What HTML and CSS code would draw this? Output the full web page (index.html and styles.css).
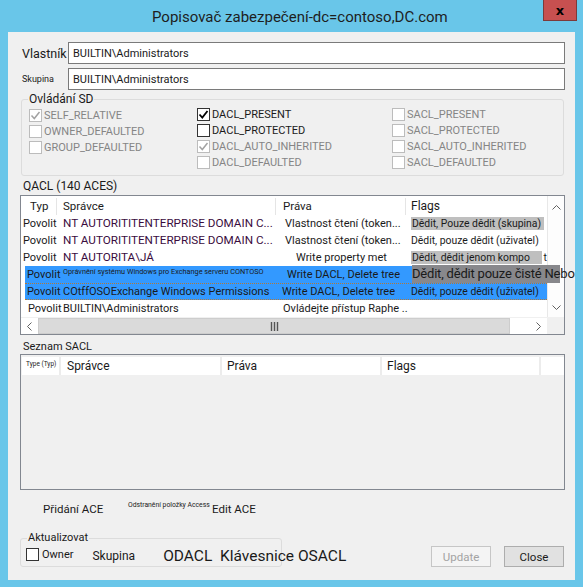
FILE: index.html
```html
<!DOCTYPE html>
<html lang="cs">
<head>
    <meta charset="UTF-8">
    <title>Popisovač zabezpečení</title>
    <link rel="stylesheet" href="styles.css">
</head>
<body>
<div class="window">
    <header class="titlebar">
        <h1 class="title">Popisovač zabezpečení-dc=contoso,DC.com</h1>
        <button class="close-x">x</button>
    </header>

    <main class="client">
        <div class="field-row">
            <label class="lbl-owner" for="owner">Vlastník</label>
            <input class="text-in" id="owner" type="text" value="BUILTIN\Administrators">
        </div>
        <div class="field-row">
            <label class="lbl-group" for="group">Skupina</label>
            <input class="text-in" id="group" type="text" value="BUILTIN\Administrators">
        </div>

        <fieldset class="sd-box">
            <legend>Ovládání SD</legend>
            <div class="sd-cols">
                <div class="sd-col first">
                    <div class="chk off on"><span class="box"><svg viewBox="0 0 11 11"><path d="M1.5 5.5l2.8 3 5.2-6.5"/></svg></span>SELF_RELATIVE</div>
                    <div class="chk off"><span class="box"></span>OWNER_DEFAULTED</div>
                    <div class="chk off"><span class="box"></span>GROUP_DEFAULTED</div>
                </div>
                <div class="sd-col">
                    <div class="chk on"><span class="box"><svg viewBox="0 0 11 11"><path d="M1.5 5.5l2.8 3 5.2-6.5"/></svg></span>DACL_PRESENT</div>
                    <div class="chk"><span class="box"></span>DACL_PROTECTED</div>
                    <div class="chk off on"><span class="box"><svg viewBox="0 0 11 11"><path d="M1.5 5.5l2.8 3 5.2-6.5"/></svg></span>DACL_AUTO_INHERITED</div>
                    <div class="chk off"><span class="box"></span>DACL_DEFAULTED</div>
                </div>
                <div class="sd-col">
                    <div class="chk off"><span class="box"></span>SACL_PRESENT</div>
                    <div class="chk off"><span class="box"></span>SACL_PROTECTED</div>
                    <div class="chk off"><span class="box"></span>SACL_AUTO_INHERITED</div>
                    <div class="chk off"><span class="box"></span>SACL_DEFAULTED</div>
                </div>
            </div>
        </fieldset>

        <div class="caption dacl-cap">QACL (140 ACES)</div>
        <div class="list dacl">
            <div class="list-body">
                <div class="dacl-head">
                    <div class="hcell typ">Typ</div>
                    <div class="hcell spr">Správce</div>
                    <div class="hcell prv">Práva</div>
                    <div class="hcell flg">Flags</div>
                </div>
                <div class="row">
                    <div class="cell typ">Povolit</div>
                    <div class="cell spr trustee">NT AUTORITITENTERPRISE DOMAIN C...</div>
                    <div class="cell prv p9">Vlastnost čtení (token...</div>
                    <div class="cell flg"><span class="mark">Dědit, Pouze dědit (skupina)</span></div>
                </div>
                <div class="row">
                    <div class="cell typ">Povolit</div>
                    <div class="cell spr trustee">NT AUTORITITENTERPRISE DOMAIN C...</div>
                    <div class="cell prv p9">Vlastnost čtení (token...</div>
                    <div class="cell flg">Dědit, pouze dědit (uživatel)</div>
                </div>
                <div class="row">
                    <div class="cell typ">Povolit</div>
                    <div class="cell spr trustee">NT AUTORITA\JÁ</div>
                    <div class="cell prv p20">Write property met</div>
                    <div class="cell flg"><span class="mark">Dědit, dědit jenom kompo</span><span class="stray">t</span></div>
                </div>
                <div class="row sel">
                    <div class="cell typ">Povolit</div>
                    <div class="cell spr tiny">Oprávnění systému Windows pro Exchange serveru CONTOSO</div>
                    <div class="cell prv p11">Write DACL, Delete tree</div>
                    <div class="cell flg big">Dědit, dědit pouze čisté Nebo</div>
                </div>
                <div class="row sel focus">
                    <div class="cell typ">Povolit</div>
                    <div class="cell spr">COtffOSOExchange Windows Permissions</div>
                    <div class="cell prv p6">Write DACL, Delete tree</div>
                    <div class="cell flg">Dědit, pouze dědit (uživatel)</div>
                </div>
                <div class="row">
                    <div class="cell typ p7">Povolit</div>
                    <div class="cell spr">BUILTIN\Administrators</div>
                    <div class="cell prv p7">Ovládejte přístup Raphe ..</div>
                    <div class="cell flg"></div>
                </div>
            </div>
            <div class="vscroll">
                <span class="arrow"><svg viewBox="0 0 9 6"><path d="M0.5 5l4-4 4 4"/></svg></span>
                <span class="arrow"><svg viewBox="0 0 9 6"><path d="M0.5 1l4 4 4-4"/></svg></span>
            </div>
            <div class="hscroll">
                <span class="arrow"><svg viewBox="0 0 6 9"><path d="M5 0.5l-4 4 4 4"/></svg></span>
                <span class="thumb"><svg viewBox="0 0 9 9"><path d="M1.5 0v9M4.5 0v9M7.5 0v9"/></svg></span>
                <span class="track"></span>
                <span class="arrow"><svg viewBox="0 0 6 9"><path d="M1 0.5l4 4-4 4"/></svg></span>
            </div>
            <div class="corner"></div>
        </div>

        <div class="caption sacl-cap">Seznam SACL</div>
        <div class="list sacl">
            <div class="sacl-head">
                <div class="hcell s-typ">Type (Typ)</div>
                <div class="hcell s-spr">Správce</div>
                <div class="hcell s-prv">Práva</div>
                <div class="hcell s-flg">Flags</div>
                <div class="hcell s-rest"></div>
            </div>
        </div>

        <div class="ace-actions">
            <span class="act add">Přidání ACE</span>
            <span class="act remove">Odstranění položky Access</span>
            <span class="act edit">Edit ACE</span>
        </div>

        <div class="bottom-row">
            <fieldset class="upd-box">
                <legend>Aktualizovat</legend>
                <div class="upd-items">
                    <span class="box plain"></span>
                    <span class="upd-owner">Owner</span>
                    <span class="upd-group">Skupina</span>
                    <span class="upd-acl">ODACL&nbsp; Klávesnice OSACL</span>
                </div>
            </fieldset>
            <button class="btn" disabled>Update</button>
            <button class="btn">Close</button>
        </div>
    </main>
</div>
</body>
</html>
```

FILE: styles.css
```css
* {
    box-sizing: border-box;
}
body {
    margin: 0;
    font-family: Roboto, "Liberation Sans", sans-serif;
    font-size: 11px;
    color: #1a1a1a;
}
.window {
    width: 583px;
    height: 587px;
    background: #69c6e9;
    padding: 0 8px 7px 8px;
    display: flex;
    flex-direction: column;
}

/* title bar */
.titlebar {
    height: 32px;
    display: flex;
    align-items: flex-start;
    flex: none;
}
.title {
    margin: 0;
    padding-left: 144px;
    font-size: 15px;
    font-weight: normal;
    line-height: 34px;
    color: #1e1e1e;
    white-space: nowrap;
}
.close-x {
    margin-left: auto;
    margin-right: -2px;
    width: 34px;
    height: 21px;
    background: #c75050;
    border: 1px solid #7d3a3a;
    border-top: none;
    font-family: "DejaVu Sans", sans-serif;
    font-weight: bold;
    font-size: 13px;
    line-height: 17px;
    color: #000;
    padding: 0;
}

/* client area */
.client {
    flex: 1;
    background: #f0f0f0;
    padding: 10px 10px 0 12px;
    display: flex;
    flex-direction: column;
}
.field-row {
    display: flex;
    align-items: center;
    height: 22px;
    margin-bottom: 4px;
}
.field-row label {
    width: 48px;
    flex: none;
    padding-left: 2px;
}
.lbl-owner {
    font-size: 12.5px;
}
.lbl-group {
    font-size: 9px;
}
.text-in {
    flex: 1;
    height: 22px;
    border: 1px solid #7a7a7a;
    padding: 0 4px;
    font-family: inherit;
    font-size: 11px;
    color: #1a1a1a;
    background: #fff;
}

/* SD control group */
.sd-box {
    margin: -2px 1px 0 1px;
    border: 1px solid #dcdcdc;
    border-radius: 3px;
    padding: 0 0 5px 0;
}
.sd-box legend {
    margin-left: 6px;
    padding: 0 1px;
    font-size: 12px;
    line-height: 14px;
}
.sd-cols {
    display: grid;
    grid-template-columns: 168px 195px 1fr;
    padding-left: 7px;
}
.chk {
    display: flex;
    align-items: center;
    height: 16px;
    gap: 2px;
    font-size: 11px;
    color: #1a1a1a;
}
.sd-col.first .chk {
    transform: translateY(1px);
}
.box {
    width: 13px;
    height: 13px;
    flex: none;
    border: 1px solid #333;
    background: #fff;
    display: flex;
    align-items: center;
    justify-content: center;
}
.box svg {
    width: 11px;
    height: 11px;
    fill: none;
    stroke: #000;
    stroke-width: 1.8;
}
.chk.off {
    color: #858585;
}
.chk.off .box {
    border-color: #bcbcbc;
}
.chk.off .box svg {
    stroke: #a2a2a2;
    stroke-width: 1.5;
}

.caption {
    font-size: 12px;
    line-height: 16px;
    padding-left: 3px;
}
.dacl-cap {
    margin: 2px 0 1px 0;
}
.sacl-cap {
    font-size: 11px;
    line-height: 14px;
    margin: 5px 0 0 0;
}

/* list views */
.list {
    border: 1px solid #828790;
    background: #fff;
    flex: none;
}
.dacl {
    height: 140px;
    display: grid;
    grid-template-columns: 1fr 17px;
    grid-template-rows: 1fr 17px;
}
.list-body {
    min-width: 0;
}
.dacl-head,
.row {
    display: grid;
    grid-template-columns: 36px 219px 130px 141px;
    white-space: nowrap;
}
.dacl-head {
    margin-top: 2px;
    height: 17px;
}
.hcell {
    background: #fff;
    border-right: 1px solid #e5e5e5;
    line-height: 17px;
    font-size: 11.5px;
}
.dacl-head .typ {
    padding-left: 9px;
}
.dacl-head .spr {
    padding-left: 6px;
}
.dacl-head .prv {
    padding-left: 7px;
}
.dacl-head .flg {
    padding-left: 5px;
    font-size: 12px;
    border-right: none;
}
.row {
    height: 17px;
    line-height: 17px;
    font-size: 11px;
}
.cell {
    overflow: visible;
    padding-left: 6px;
}
.cell.typ {
    padding-left: 2px;
}
.cell.trustee {
    color: #3a0d3e;
    font-size: 11.7px;
}
.cell.p6 { padding-left: 6px; }
.cell.p7 { padding-left: 7px; }
.cell.p9 { padding-left: 9px; }
.cell.p11 { padding-left: 11px; }
.cell.p20 { padding-left: 20px; }
.cell.typ.p7 {
    padding-left: 7px;
}
.cell.tiny {
    font-size: 7.3px;
    line-height: 12px;
}
.cell.flg {
    padding-left: 5px;
    display: flex;
    align-items: center;
    font-size: 10.4px;
}
.mark {
    display: inline-block;
    background: #bfbfbf;
    height: 13px;
    line-height: 13px;
    width: 133px;
    padding-left: 1px;
}
.stray {
    margin-left: 2px;
    position: relative;
    z-index: 2;
}
.row.sel {
    margin-left: 4px;
    grid-template-columns: 32px 219px 130px 141px;
    background: #3399ff;
}
.row.sel:not(.focus) {
    background: linear-gradient(#3399ff, #3399ff) 0 0 / 387px 100% no-repeat;
}
.row.focus {
    border-top: 1px dotted #b0783a;
    border-bottom: 1px dotted #b0783a;
    line-height: 15px;
}
.cell.big {
    position: relative;
    z-index: 2;
    padding-left: 0;
    margin-left: 6px;
    width: 148px;
    height: 18px;
    margin-top: -1px;
    background: #88888c;
    font-size: 13px;
    letter-spacing: -0.2px;
    line-height: 18px;
}

.vscroll {
    background: #fdfdfd;
    border-left: 1px solid #e8e8e8;
    display: flex;
    flex-direction: column;
    justify-content: space-between;
    padding: 4px 0 2px 0;
}
.vscroll .arrow {
    height: 15px;
    display: flex;
    align-items: center;
    justify-content: center;
}
.arrow svg {
    width: 9px;
    height: 9px;
    fill: none;
    stroke: #606060;
    stroke-width: 1;
}
.hscroll {
    display: flex;
    background: #fff;
    border-top: 1px solid #f0f0f0;
}
.hscroll .arrow {
    width: 17px;
    display: flex;
    align-items: center;
    justify-content: center;
}
.thumb {
    width: 472px;
    background: #dadada;
    border: 1px solid #cdcdcd;
    display: flex;
    align-items: center;
    justify-content: center;
}
.thumb svg {
    width: 9px;
    height: 9px;
    stroke: #555;
    stroke-width: 1.4;
}
.track {
    flex: 1;
    background: #fff;
}
.corner {
    background: #f0f0f0;
}

.sacl {
    height: 136px;
    background: #f0f0f0;
    padding: 2px 0 0 1px;
}
.sacl-head {
    display: grid;
    grid-template-columns: 39px 161px 160px 159px 1fr;
    height: 16px;
    border-bottom: 1px solid #e3e3e3;
}
.sacl-head .hcell {
    border-right: 2px solid #ececec;
    font-size: 12px;
    line-height: 18px;
    padding-left: 5px;
    white-space: nowrap;
}
.sacl-head .s-spr {
    padding-left: 6px;
}
.sacl-head .s-typ {
    font-size: 6.5px;
    line-height: 14px;
    padding-left: 4px;
}
.sacl-head .s-rest {
    border-right: none;
}

/* ACE buttons */
.ace-actions {
    margin-top: 11px;
    height: 16px;
    display: flex;
    align-items: flex-end;
    white-space: nowrap;
}
.act {
    font-size: 11.5px;
    line-height: 16px;
}
.act.add {
    margin-left: 23px;
    width: 85px;
}
.act.remove {
    font-size: 6.8px;
    line-height: 8px;
    align-self: flex-start;
    width: 84px;
}
.act.edit {
    margin-left: 0;
}

/* bottom */
.bottom-row {
    margin-top: 15px;
    display: flex;
    align-items: flex-start;
}
.upd-box {
    width: 262px;
    min-width: 0;
    margin: 0;
    border: 1px solid #dcdcdc;
    border-radius: 3px;
    padding: 0 0 1px 5px;
}
.upd-box legend {
    margin-left: 1px;
    padding: 0 1px;
    font-size: 11px;
    line-height: 12px;
}
.upd-items {
    display: flex;
    align-items: center;
    height: 21px;
    white-space: nowrap;
}
.box.plain {
    border-color: #333;
}
.upd-owner {
    margin-left: 3px;
    font-size: 11px;
}
.upd-group {
    margin-left: 19px;
    font-size: 12px;
    padding-top: 3px;
}
.upd-acl {
    margin-left: 28px;
    font-size: 15.5px;
    padding-top: 3px;
}
.btn {
    width: 60px;
    height: 21px;
    margin-top: 14px;
    font-family: inherit;
    font-size: 11.5px;
    background: #e1e1e1;
    border: 1px solid #adadad;
    color: #1a1a1a;
    padding: 0;
}
.btn:disabled {
    margin-left: auto;
    margin-right: 13px;
    background: #f4f4f4;
    border-color: #c6c6c6;
    color: #a3a3a3;
}
.btn:last-child {
    margin-right: 1px;
}
```
